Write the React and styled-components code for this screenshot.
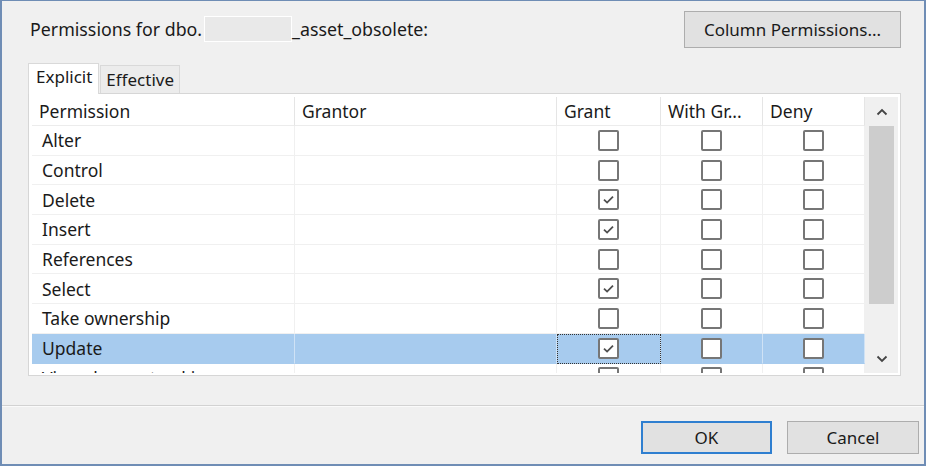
import React from "react";
import styled, { createGlobalStyle } from "styled-components";

const GlobalStyle = createGlobalStyle`
  html, body {
    margin: 0;
    padding: 0;
    background: #f0f0f0;
  }
  body {
    font-family: "Noto Sans", "Open Sans", sans-serif;
    color: #1a1a1a;
  }
`;

const permissions = [
  { name: "Alter", grant: false },
  { name: "Control", grant: false },
  { name: "Delete", grant: true },
  { name: "Insert", grant: true },
  { name: "References", grant: false },
  { name: "Select", grant: true },
  { name: "Take ownership", grant: false },
  { name: "Update", grant: true, selected: true },
  { name: "View change tracking", grant: false },
];

function Check({ checked }) {
  return (
    <Box>
      {checked && (
        <svg width="15" height="15" viewBox="0 0 15 15">
          <path d="M3 7.6 L6.1 10.6 L12 4.6" fill="none" stroke="#4f4f4f" strokeWidth="1.8" />
        </svg>
      )}
    </Box>
  );
}

function Chevron({ up }) {
  return (
    <svg width="12" height="8" viewBox="0 0 12 8">
      <path
        d={up ? "M1.5 6.5 L6 2 L10.5 6.5" : "M1.5 1.5 L6 6 L10.5 1.5"}
        fill="none"
        stroke="#444"
        strokeWidth="1.8"
      />
    </svg>
  );
}

export default function App() {
  return (
    <>
      <GlobalStyle />
      <Window>
        <TopRow>
          <Title>
            Permissions for dbo.<Redacted />_asset_obsolete:
          </Title>
          <Button $w="217px" $h="37px">Column Permissions...</Button>
        </TopRow>

        <Tabs>
          <Tab $active>Explicit</Tab>
          <Tab>Effective</Tab>
        </Tabs>

        <Panel>
          <GridArea>
            <Table>
              <HeadCell>Permission</HeadCell>
              <HeadCell>Grantor</HeadCell>
              <HeadCell>Grant</HeadCell>
              <HeadCell>With Gr...</HeadCell>
              <HeadCell>Deny</HeadCell>
              {permissions.map((p) => (
                <React.Fragment key={p.name}>
                  <Cell $sel={p.selected}>{p.name}</Cell>
                  <Cell $sel={p.selected} />
                  <CheckCell $sel={p.selected} $focus={p.selected}>
                    <Check checked={p.grant} />
                  </CheckCell>
                  <CheckCell $sel={p.selected}>
                    <Check />
                  </CheckCell>
                  <CheckCell $sel={p.selected}>
                    <Check />
                  </CheckCell>
                </React.Fragment>
              ))}
            </Table>
            <ScrollBar>
              <Arrow><Chevron up /></Arrow>
              <Track>
                <Thumb />
              </Track>
              <Arrow><Chevron /></Arrow>
            </ScrollBar>
          </GridArea>
        </Panel>

        <Footer>
          <Button $w="131px" $h="33px" $primary>OK</Button>
          <Button $w="132px" $h="33px">Cancel</Button>
        </Footer>
      </Window>
    </>
  );
}

const Window = styled.div`
  width: 926px;
  height: 466px;
  box-sizing: border-box;
  border: 2px solid #6f8db5;
  border-top-width: 1px;
  background: #f0f0f0;
  display: flex;
  flex-direction: column;
`;

const TopRow = styled.div`
  display: flex;
  align-items: center;
  justify-content: space-between;
  padding: 9px 23px 0 28px;
  height: 38px;
`;

const Title = styled.div`
  font-size: 17.8px;
  display: flex;
  align-items: center;
  color: #1a1a1a;
`;

const Redacted = styled.span`
  display: inline-block;
  width: 86px;
  height: 24px;
  background: #e9e9e9;
  border: 1px solid #ffffff;
  margin: 0 0 0 2px;
`;

const Button = styled.button`
  width: ${(p) => p.$w};
  height: ${(p) => p.$h};
  box-sizing: border-box;
  background: #e1e1e1;
  border: ${(p) => (p.$primary ? "2px solid #2f7fd0" : "1px solid #adadad")};
  font-family: "Noto Sans", "Open Sans", sans-serif;
  font-size: 17px;
  color: #1a1a1a;
  padding: 0;
`;

const Tabs = styled.div`
  display: flex;
  align-items: flex-end;
  margin: 15px 0 0 26px;
  height: 30px;
`;

const Tab = styled.div`
  box-sizing: border-box;
  height: ${(p) => (p.$active ? "31px" : "28px")};
  padding: ${(p) => (p.$active ? "0 6px 0 7px" : "0 5px")};
  background: ${(p) => (p.$active ? "#ffffff" : "#ececec")};
  border: 1px solid #d9d9d9;
  border-bottom: none;
  margin-bottom: ${(p) => (p.$active ? "-1px" : "0")};
  margin-left: ${(p) => (p.$active ? "0" : "1px")};
  position: relative;
  z-index: ${(p) => (p.$active ? 1 : 0)};
  font-size: 17px;
  line-height: ${(p) => (p.$active ? "26px" : "28px")};
  color: #1a1a1a;
`;

const Panel = styled.div`
  margin-left: 26px;
  width: 873px;
  height: 283px;
  box-sizing: border-box;
  background: #ffffff;
  border: 1px solid #d6d6d6;
  padding: 3px 1px 2px 3px;
`;

const GridArea = styled.div`
  display: flex;
  height: 100%;
`;

const Table = styled.div`
  display: grid;
  grid-template-columns: 263px 262px 104px 102px 102px;
  grid-template-rows: 29px;
  grid-auto-rows: 29.7px;
  overflow: hidden;
  height: 100%;
  width: 833px;
`;

const HeadCell = styled.div`
  display: flex;
  align-items: center;
  padding-left: 7px;
  font-size: 17.5px;
  color: #1a1a1a;
  border-right: 1px solid #e5e5e5;
  border-bottom: 1px solid #ececec;
  box-sizing: border-box;
  white-space: nowrap;
  overflow: hidden;
`;

const Cell = styled.div`
  display: flex;
  align-items: center;
  padding-left: 10px;
  font-size: 17.5px;
  color: #1a1a1a;
  background: ${(p) => (p.$sel ? "#a7cbee" : "#ffffff")};
  border-right: 1px solid ${(p) => (p.$sel ? "#cfe2f5" : "#f0f0f0")};
  border-bottom: 1px solid ${(p) => (p.$sel ? "#a7cbee" : "#f0f0f0")};
  box-sizing: border-box;
  white-space: nowrap;
`;

const CheckCell = styled(Cell)`
  justify-content: center;
  padding-left: 0;
  outline: ${(p) => (p.$focus ? "1px dotted #333" : "none")};
  outline-offset: -1px;
`;

const Box = styled.div`
  width: 21px;
  height: 21px;
  box-sizing: border-box;
  border: 2px solid #767676;
  border-radius: 2px;
  background: #ffffff;
  display: flex;
  align-items: center;
  justify-content: center;
`;

const ScrollBar = styled.div`
  width: 33px;
  display: flex;
  flex-direction: column;
  background: #f0f0f0;
  align-items: center;
`;

const Arrow = styled.div`
  height: 29px;
  display: flex;
  align-items: center;
  justify-content: center;
  width: 100%;
`;

const Track = styled.div`
  flex: 1;
  width: 100%;
  display: flex;
  justify-content: center;
`;

const Thumb = styled.div`
  width: 25px;
  height: 178px;
  background: #cdcdcd;
`;

const Footer = styled.div`
  margin-top: 29px;
  border-top: 1px solid #d2d2d2;
  box-shadow: inset 0 1px 0 #fafafa;
  flex: 1;
  display: flex;
  justify-content: flex-end;
  align-items: flex-start;
  gap: 15px;
  padding: 15px 5px 0 0;
`;
